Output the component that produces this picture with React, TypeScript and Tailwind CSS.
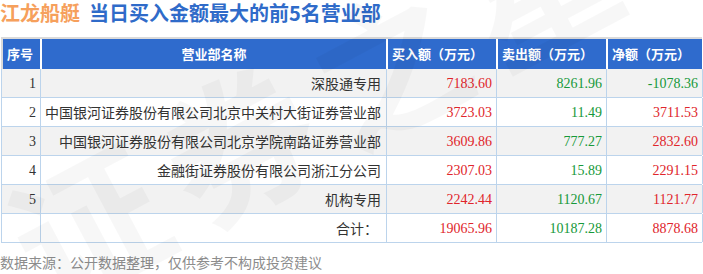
const rows = [
  { no: "1", name: "深股通专用", buy: "7183.60", sell: "8261.96", net: "-1078.36", netUp: false },
  { no: "2", name: "中国银河证券股份有限公司北京中关村大街证券营业部", buy: "3723.03", sell: "11.49", net: "3711.53", netUp: true },
  { no: "3", name: "中国银河证券股份有限公司北京学院南路证券营业部", buy: "3609.86", sell: "777.27", net: "2832.60", netUp: true },
  { no: "4", name: "金融街证券股份有限公司浙江分公司", buy: "2307.03", sell: "15.89", net: "2291.15", netUp: true },
  { no: "5", name: "机构专用", buy: "2242.44", sell: "1120.67", net: "1121.77", netUp: true },
];

const cjk = "font-['Noto_Sans_CJK_SC','Noto_Sans',sans-serif]";
const num = "font-['Liberation_Serif',serif]";
const cols = "grid grid-cols-[39px_346px_110px_110px_96px]";

export default function App() {
  return (
    <div className={`relative w-[703px] h-[274px] overflow-hidden bg-white ${cjk}`}>
      {/* title */}
      <div className="h-[26px] flex items-center text-[20px] font-bold leading-[26px]">
        <span className="text-[#f6a05c]">江龙船艇</span>
        <span className="ml-[9px] text-[#2f6bc9]">当日买入金额最大的前5名营业部</span>
      </div>

      {/* table */}
      <div className="mt-[11px] ml-px w-[701px] border-t-2 border-[#dadada]">
        <div className={`${cols} h-[30px] bg-[#2f6bcd] text-white text-[13px] font-semibold border-l-2 border-[#dadada]`}>
          <div className="flex items-center pl-[4px] border-r-2 border-white">序号</div>
          <div className="flex items-center justify-center border-r-2 border-white">营业部名称</div>
          <div className="flex items-center pl-[4px] border-r-2 border-white">买入额（万元）</div>
          <div className="flex items-center pl-[4px] border-r-2 border-white">卖出额（万元）</div>
          <div className="flex items-center pl-[4px]">净额（万元）</div>
        </div>

        {rows.map((r, i) => (
          <div
            key={r.no}
            className={`${cols} h-[29px] border-l border-b border-[#bcd4ec] ${i % 2 === 0 ? "bg-[#f2f2f2]" : "bg-white"}`}
          >
            <div className={`flex items-center justify-end pr-[4px] border-r border-[#bcd4ec] text-[14px] text-[#333] ${num}`}>{r.no}</div>
            <div className="flex items-center justify-end pr-[5px] border-r border-[#bcd4ec] text-[14px] text-[#333] whitespace-nowrap">{r.name}</div>
            <div className={`flex items-center justify-end pr-[4px] border-r border-[#bcd4ec] text-[14px] text-[#e0252b] ${num}`}>{r.buy}</div>
            <div className={`flex items-center justify-end pr-[4px] border-r border-[#bcd4ec] text-[14px] text-[#17993a] ${num}`}>{r.sell}</div>
            <div className={`flex items-center justify-end pr-[4px] border-r border-[#bcd4ec] text-[14px] ${r.netUp ? "text-[#e0252b]" : "text-[#17993a]"} ${num}`}>{r.net}</div>
          </div>
        ))}

        <div className={`${cols} h-[29px] border-l border-b border-[#bcd4ec] bg-white`}>
          <div className="border-r border-[#bcd4ec]" />
          <div className="flex items-center justify-end pr-[8px] border-r border-[#bcd4ec] text-[14px] text-[#333]">合计：</div>
          <div className={`flex items-center justify-end pr-[4px] border-r border-[#bcd4ec] text-[14px] text-[#e0252b] ${num}`}>19065.96</div>
          <div className={`flex items-center justify-end pr-[4px] border-r border-[#bcd4ec] text-[14px] text-[#17993a] ${num}`}>10187.28</div>
          <div className={`flex items-center justify-end pr-[4px] border-r border-[#bcd4ec] text-[14px] text-[#e0252b] ${num}`}>8878.68</div>
        </div>
      </div>

      {/* footer */}
      <div className="mt-[12px] text-[14px] text-[#8c8c8c] leading-none">数据来源：公开数据整理，仅供参考不构成投资建议</div>

      {/* watermark */}
      <div className="pointer-events-none absolute left-[-20px] top-[20px] -rotate-[28deg] origin-center text-[150px] font-bold leading-none text-black/[0.03] whitespace-nowrap tracking-[20px]">
        证券之星
      </div>
    </div>
  );
}
